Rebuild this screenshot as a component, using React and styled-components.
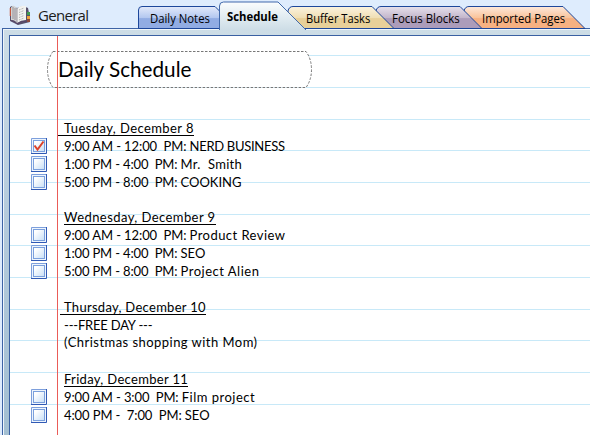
import React from "react";
import styled, { createGlobalStyle } from "styled-components";

const GlobalStyle = createGlobalStyle`
  * { box-sizing: border-box; }
  body { margin: 0; overflow: hidden; background: #deecfd; }
`;

const Window = styled.div`
  width: 590px;
  height: 435px;
  display: flex;
  flex-direction: column;
  overflow: hidden;
  background: #deecfd;
  color: #000;
`;

const Header = styled.header`
  flex: none;
  display: flex;
  height: 28px;
  padding-left: 9px;
`;

const Notebook = styled.div`
  display: flex;
  width: 129px;
  gap: 7px;
  svg { flex: none; margin-top: 4px; }
`;

const NotebookName = styled.span`
  font: 15px/30px "Open Sans", sans-serif;
  letter-spacing: ${(p) => p.$spacing}px;
  color: #1b1b1b;
  white-space: nowrap;
`;

const TabStrip = styled.nav`
  display: flex;
  align-items: flex-end;
  height: 29px;
`;

const TabItem = styled.div`
  position: relative;
  flex: none;
  z-index: ${(p) => p.$z};
  width: ${(p) => p.$width}px;
  height: ${(p) => (p.$active ? 28 : 23)}px;
  margin-right: ${(p) => p.$overlap}px;
  padding-left: ${(p) => p.$pad}px;
`;

const TabShape = styled.svg`
  position: absolute;
  inset: 0;
  overflow: visible;
`;

const TabLabel = styled.span`
  position: relative;
  display: block;
  width: max-content;
  font: ${(p) => (p.$active ? "700 13px/30px" : "400 13px/24px")} "Open Sans", sans-serif;
  transform: scaleX(${(p) => p.$scale});
  transform-origin: left;
  white-space: nowrap;
`;

const Frame = styled.main`
  flex: 1;
  margin-left: 2px;
  padding: 6px 0 0 6px;
  border: solid #3d63a5;
  border-width: 1px 0 0 1px;
  background: linear-gradient(#cddde6, #b5cbdc 180px, #a3bfd2);
  box-shadow: inset 1px 1px #eef5fa;
`;

const Page = styled.section`
  height: 100%;
  border: solid #3a60a2;
  border-width: 1px 0 0 1px;
  background:
    linear-gradient(#ea5c58, #ea5c58) 47px 0 / 1px 100% no-repeat,
    repeating-linear-gradient(transparent 0 19.15px, #c8e9f8 19.15px 20.15px, transparent 20.15px 31.7px),
    #fff;
`;

const TitleBox = styled.div`
  position: relative;
  width: 266px;
  height: 37px;
  margin: 15px 0 0 37px;
  padding-left: 11px;
`;

const TitleOutline = styled.svg`
  position: absolute;
  inset: 0;
`;

const Title = styled.h1`
  position: relative;
  margin: 0;
  width: max-content;
  font: 400 21px/36px Lato, sans-serif;
  transform: scaleX(${(p) => p.$scale});
  transform-origin: left;
`;

const Day = styled.section`
  margin: ${(p) => p.$gap}px 0 0 21px;
`;

const Row = styled.div`
  display: flex;
  align-items: flex-start;
  height: ${(p) => p.$height || 18}px;
`;

const Marker = styled.span`
  flex: none;
  width: 33px;
  height: 16px;
  svg { display: block; }
`;

const Line = styled.span`
  font: 13px/16px Lato, sans-serif;
  letter-spacing: ${(p) => p.$spacing || 0}px;
  white-space: pre;
`;

const DayName = styled.span`
  height: 16px;
  margin-left: ${(p) => -p.$lead}px;
  padding-left: ${(p) => p.$lead}px;
  border-bottom: 1px solid #000;
  font: 13px/17px Lato, sans-serif;
  letter-spacing: ${(p) => p.$spacing || 0}px;
  white-space: pre;
`;

function NotebookIcon() {
  return (
    <svg width="22" height="22" viewBox="0 0 22 22">
      <path d="M1 3 L3 2 L8 4 L14 2 L19 4 L20 9 L21 10 V18 L9 21 L1 17Z" fill="#56506a" />
      <path d="M1.500 4V12" stroke="#c4583f" strokeWidth="1.500" />
      <path d="M18 8h3v3h-3z" fill="#3f9b4f" />
      <path d="M18 12h3v3h-3z" fill="#f0a33a" />
      <path d="M18 15h3v3h-3z" fill="#8b4b3f" />
      <path d="M2 3.5 L4 1.5 Q7 2 8 5 V19 Q6 16 2 16Z" fill="#d4d4d4" />
      <path d="M8 5 Q11 1 17 2 V16 Q12 16 8 19Z" fill="#f2f2f0" />
      <path d="M8 5V19M4 3V15M6 4V16" stroke="#85818b" strokeWidth=".8" fill="none" />
      <path d="M10 6L15 4M10 8.5L15 6.5M10 11L15 9M10 13.5L15 11.5M10 16L15 14" stroke="#aaa" strokeWidth="1" strokeDasharray="1 .7" />
      <path d="M2 16.500Q6 16.500 8 20Q12 17 18 17" stroke="#5a4568" fill="none" />
    </svg>
  );
}

function CheckBox({ checked }) {
  return (
    <svg width="16" height="16" viewBox="0 0 16 16">
      <defs>
        <linearGradient id="boxFill" x1="0" y1="0" x2="1" y2="1">
          <stop offset="0.2" stopColor="#fff" />
          <stop offset="1" stopColor="#c7def6" />
        </linearGradient>
      </defs>
      <rect width="16" height="16" fill="#eef5fd" />
      <path d="M.5 16V.5H16" stroke="#7d9fdc" fill="none" />
      <path d="M0 15.5H15.5V0" stroke="#3059b4" fill="none" />
      <rect x="2.5" y="2.5" width="11" height="11" fill="url(#boxFill)" stroke="#7ba0dd" />
      {checked && <path d="M3.5 7.5 L6.5 11.5 L12.5 3.5" stroke="#dc432b" strokeWidth="2" fill="none" />}
    </svg>
  );
}

const tabs = [
  { label: "Daily Notes", width: 82, overlap: -1, pad: 12, scale: 0.87, fill: ["#e3eafa", "#b4c8f0", "#91ace3"],
    d: "M.5 22.500V4Q.5 .5 4 .5H77L82 5.5V22.500Z" },
  { label: "Schedule", active: true, width: 87, overlap: -18, pad: 8, scale: 0.87, fill: ["#fbfdfd", "#e3edf2", "#cddde6"],
    d: "M.5 29V5Q.5 1 4.500 1H59L87 29" },
  { label: "Buffer Tasks", width: 106, overlap: -18, pad: 18, scale: 0.86, fill: ["#fbf3df", "#f0dfb5", "#e8d099"],
    d: "M0 5Q1 .5 5 .5H84L106 22.500H0Z" },
  { label: "Focus Blocks", width: 106, overlap: -18, pad: 16, scale: 0.88, fill: ["#e7e1ec", "#c4b7cc", "#ac9cba"],
    d: "M0 5Q1 .5 5 .5H84L106 22.500H0Z" },
  { label: "Imported Pages", width: 121, overlap: 0, pad: 18, scale: 0.87, fill: ["#fde9dc", "#f9c49c", "#f6b182"],
    d: "M0 5Q1 .5 5 .5H99L121 22.500H0Z" },
];

function Tab({ tab, index }) {
  const [top, middle, bottom] = tab.fill;
  return (
    <TabItem $width={tab.width} $active={tab.active} $overlap={tab.overlap} $pad={tab.pad} $z={tab.active ? 9 : 6 - index}>
      <TabShape width={tab.width} height={tab.active ? 28 : 23}>
        <defs>
          <linearGradient id={`tab${index}`} x1="0" y1="0" x2="0" y2="1">
            <stop offset="0" stopColor={top} />
            <stop offset="0.5" stopColor={middle} />
            <stop offset={tab.active ? 1 : 0.55} stopColor={bottom} />
            <stop offset="1" stopColor={bottom} />
          </linearGradient>
        </defs>
        <path d={tab.d} fill={`url(#tab${index})`} stroke={tab.active ? "#4169ab" : "#1d479b"} />
      </TabShape>
      <TabLabel $active={tab.active} $scale={tab.scale}>{tab.label}</TabLabel>
    </TabItem>
  );
}

const days = [
  { name: "Tuesday, December 8", gap: 32, lead: 6, spacing: 0.42, entries: [
    { time: "9:00 AM - 12:00  PM: ", shift: -0.1, text: "NERD BUSINESS", spacing: -0.3, box: true, checked: true },
    { time: "1:00 PM - 4:00  PM: ", shift: -0.15, text: "Mr.  Smith", spacing: 0.3, box: true },
    { time: "5:00 PM - 8:00  PM: ", shift: -0.15, text: "COOKING", box: true },
  ] },
  { name: "Wednesday, December 9", gap: 17, lead: 0, spacing: 0.43, entries: [
    { time: "9:00 AM - 12:00  PM: ", shift: -0.1, text: "Product Review", spacing: 0.45, box: true },
    { time: "1:00 PM - 4:00  PM: ", shift: -0.15, text: "SEO", box: true },
    { time: "5:00 PM - 8:00  PM: ", shift: -0.15, text: "Project Alien", spacing: 0.5, box: true },
  ] },
  { name: "Thursday, December 10", gap: 18, lead: 4, spacing: 0.29, entries: [
    { text: "---FREE DAY ---", spacing: -0.2, height: 17 },
    { text: "(Christmas shopping with Mom)", spacing: 0.46 },
  ] },
  { name: "Friday, December 11", gap: 19, lead: 0, spacing: 0.32, entries: [
    { time: "9:00 AM - 3:00  PM: ", shift: -0.12, text: "Film project", spacing: 0.5, box: true },
    { time: "4:00 PM -  7:00  PM: ", shift: -0.1, text: "SEO", box: true },
  ] },
];

export default function App() {
  return (
    <Window>
      <GlobalStyle />
      <Header>
        <Notebook>
          <NotebookIcon />
          <NotebookName $spacing={-0.7}>General</NotebookName>
        </Notebook>
        <TabStrip>
          {tabs.map((tab, i) => <Tab key={tab.label} tab={tab} index={i} />)}
        </TabStrip>
      </Header>
      <Frame>
        <Page>
          <TitleBox>
            <TitleOutline width="266" height="37">
              <path d="M6 .5H259Q264.500 8 264.500 18.500T259 36.500H6Q.5 29 .5 18.500T6 .5Z" fill="#fff" stroke="#777" strokeDasharray="2.500 1.500" />
              <path d="M10.500 0V37" stroke="#ea5c58" />
            </TitleOutline>
            <Title $scale={0.985}>Daily Schedule</Title>
          </TitleBox>
          {days.map((day) => (
            <Day key={day.name} $gap={day.gap}>
              <Row>
                <Marker />
                <DayName $lead={day.lead} $spacing={day.spacing}>{day.name}</DayName>
              </Row>
              {day.entries.map((entry) => (
                <Row key={entry.time || entry.text} $height={entry.height}>
                  <Marker>{entry.box && <CheckBox checked={entry.checked} />}</Marker>
                  {entry.time && <Line $spacing={entry.shift}>{entry.time}</Line>}
                  <Line $spacing={entry.spacing}>{entry.text}</Line>
                </Row>
              ))}
            </Day>
          ))}
        </Page>
      </Frame>
    </Window>
  );
}
